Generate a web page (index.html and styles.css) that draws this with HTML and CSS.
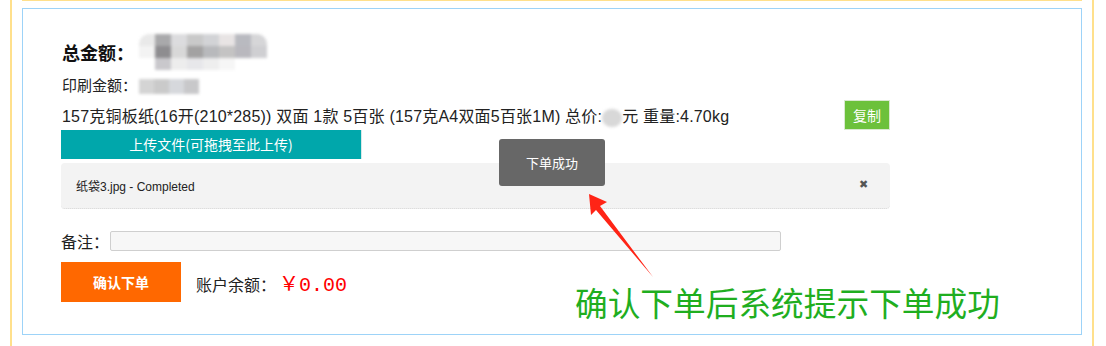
FILE: index.html
```html
<!DOCTYPE html>
<html lang="zh-CN">
<head>
    <meta charset="UTF-8">
    <title>下单</title>
    <link rel="stylesheet" href="styles.css">
</head>
<body>
    <div class="page">
        <div class="top-line"></div>

        <div class="order-box">
            <div class="total-row">
                <span class="total-label">总金额：</span>
                <span class="mosaic mosaic-big">
                    <i style="background:#e9e9e9"></i><i style="background:#a9a9ab"></i><i style="background:#dcdcde"></i><i style="background:#c9c9c9"></i><i style="background:#d2d3d6"></i><i style="background:#e8e4e4"></i><i style="background:#b9bac0"></i><i style="background:#d6d6d8"></i>
                    <i style="background:#f3f3f3"></i><i style="background:#8e8d90"></i><i style="background:#d8d8d8"></i><i style="background:#a3a2a2"></i><i style="background:#b8b9bc"></i><i style="background:#c4c3c3"></i><i style="background:#b9b8be"></i><i style="background:#cfcfd2"></i>
                    <i style="background:#fff"></i><i style="background:#c9c8cc"></i><i style="background:#ededed"></i><i style="background:#e7e7ea"></i><i style="background:#eeeeee"></i><i style="background:#f6f6f6"></i><i style="background:#fff"></i><i style="background:#fff"></i>
                </span>
            </div>

            <div class="sub-row">
                <span class="label">印刷金额：</span><span class="mosaic mosaic-small"></span>
            </div>

            <div class="info-row">
                <span class="info-text">157克铜板纸(16开(210*285)) 双面 1款 5百张 (157克A4双面5百张1M) 总价:<span class="mosaic mosaic-dot"></span>元 重量:4.70kg</span>
                <button class="btn-copy">复制</button>
            </div>

            <div class="upload-bar">上传文件(可拖拽至此上传)</div>

            <div class="file-row">
                <span class="file-name">纸袋3.jpg - Completed</span>
                <span class="file-remove">✖</span>
            </div>

            <div class="remark-row">
                <label class="label">备注：</label>
                <input class="remark-input" type="text">
            </div>

            <div class="submit-row">
                <button class="btn-submit">确认下单</button>
                <span class="label balance-label">账户余额：</span>
                <span class="balance-value">￥0.00</span>
            </div>
        </div>

        <div class="toast">下单成功</div>

        <svg class="arrow" width="80" height="92" viewBox="0 0 80 92">
            <polygon points="9,4 27,12 20,16 73,87 16,20 11,25" fill="#ff2416"/>
        </svg>

        <div class="note">确认下单后系统提示下单成功</div>
    </div>
</body>
</html>
```

FILE: styles.css
```css
* {
    margin: 0;
    padding: 0;
    box-sizing: border-box;
}

body {
    font-family: "Noto Sans CJK SC", "Liberation Sans", sans-serif;
    background: #fff;
    color: #222;
    overflow: hidden;
}

/* labels ending in a full-width colon: centred punctuation */
.label,
.total-label {
    font-family: "Noto Sans CJK TC", "Noto Sans CJK SC", sans-serif;
}

.page {
    position: relative;
    width: 1084px;
    height: 360px;
    margin-left: 10px;
    padding: 0 10px;
    border-left: 2px solid #ffe08c;
    border-right: 2px solid #ffe08c;
}

.top-line {
    height: 1px;
    background: #ffe08c;
    margin-bottom: 7px;
}

.order-box {
    height: 327px;
    border: 1px solid #9dd3f8;
    padding: 24px 0 0 38px;
}

.total-row {
    display: flex;
    align-items: center;
    height: 37px;
}

.total-label {
    font-size: 18px;
    font-weight: bold;
    color: #111;
    margin-left: 1px;
}

.mosaic {
    display: inline-block;
    filter: blur(1.5px);
}

.mosaic-big {
    display: grid;
    grid-template-columns: repeat(8, 16px);
    grid-auto-rows: 12px;
    margin-left: 5px;
    border-radius: 10px;
    overflow: hidden;
}

.mosaic-big i {
    display: block;
}

.mosaic-small {
    width: 60px;
    height: 15px;
    margin-left: 2px;
    vertical-align: middle;
    background: linear-gradient(90deg, #d4d4d4 0 25%, #cacaca 25% 50%, #d6d8dc 50% 75%, #c8c8ca 75%);
}

.mosaic-dot {
    width: 20px;
    height: 18px;
    vertical-align: middle;
    border-radius: 9px;
    background: #d8d8d8;
}

.sub-row {
    font-size: 15px;
    height: 22px;
    line-height: 22px;
    margin-top: 4px;
    margin-left: 1px;
}

.info-row {
    display: flex;
    align-items: center;
    justify-content: space-between;
    width: 829px;
    height: 30px;
    margin-top: 4px;
}

.info-text {
    font-family: "Liberation Sans", "Noto Sans CJK SC", sans-serif;
    font-size: 16px;
    letter-spacing: 0.2px;
    margin-left: 1px;
}

.btn-copy {
    width: 46px;
    height: 30px;
    border: 1px solid #d9e9cf;
    background: #6cc13b;
    color: #fff;
    font-family: inherit;
    font-size: 14px;
}

.upload-bar {
    width: 301px;
    height: 29px;
    line-height: 29px;
    background: #00a7ab;
    border-right: 1px solid #d8e8e8;
    color: #fff;
    font-size: 14px;
    text-align: center;
}

.file-row {
    display: flex;
    align-items: center;
    justify-content: space-between;
    width: 829px;
    height: 46px;
    margin-top: 4px;
    padding: 0 22px 0 15px;
    background: #f3f3f3;
    border-radius: 4px;
    border-bottom: 1px dotted #d6d6d6;
}

.file-name {
    font-family: "Liberation Sans", "Noto Sans CJK SC", sans-serif;
    font-size: 12px;
    color: #222;
}

.file-remove {
    font-size: 11px;
    color: #555;
    margin-top: -6px;
}

.remark-row {
    display: flex;
    align-items: center;
    margin-top: 22px;
    height: 20px;
    font-size: 16px;
}

.remark-row label {
    width: 49px;
}

.remark-input {
    width: 671px;
    height: 20px;
    border: 1px solid #cfcfcf;
    border-radius: 2px;
    background: #f7f7f7;
}

.submit-row {
    display: flex;
    align-items: center;
    margin-top: 11px;
    height: 40px;
}

.btn-submit {
    width: 120px;
    height: 40px;
    border: none;
    background: #ff6800;
    color: #fff;
    font-family: inherit;
    font-size: 14px;
    font-weight: bold;
}

.balance-label {
    font-size: 16px;
    margin-left: 15px;
    margin-top: 4px;
}

.balance-value {
    font-family: "Liberation Mono", "Noto Sans CJK SC", monospace;
    font-size: 20px;
    color: #f00;
    margin-left: 3px;
}

/* overlays: toast popup and screenshot annotation */
.toast {
    position: absolute;
    left: 487px;
    top: 139px;
    width: 106px;
    height: 47px;
    line-height: 47px;
    background: #676767;
    border-radius: 3px;
    color: #fff;
    font-size: 13px;
    text-align: center;
}

.arrow {
    position: absolute;
    left: 568px;
    top: 190px;
}

.note {
    position: absolute;
    left: 563px;
    top: 281px;
    font-size: 32.7px;
    line-height: 42px;
    color: #1fae1f;
}
```
